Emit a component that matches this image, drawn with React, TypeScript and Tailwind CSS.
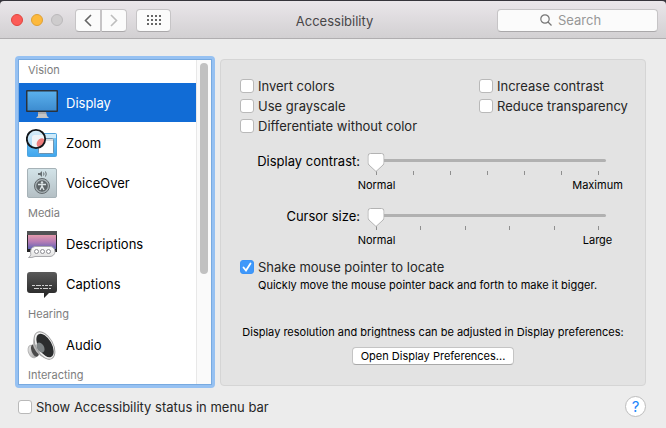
import { useState, type ReactNode } from "react";

const DisplayIcon = () => (
	<svg width="32" height="32" viewBox="0 -3 32 32" aria-hidden="true">
		<defs>
			<linearGradient id="screen" x1="0" y1="0" x2="0" y2="1">
				<stop offset="0" stopColor="#5ab0ec" />
				<stop offset="1" stopColor="#3d8cd0" />
			</linearGradient>
		</defs>
		<path d="M12 22h8l1 4 2 2H10l2-2z" fill="#c4c4c4" />
		<path d="M12 23h8" stroke="#8b8f96" />
		<rect width="32" height="22" rx="1" fill="#2a323c" />
		<rect x="1.500" y="1.500" width="29" height="19" fill="url(#screen)" />
	</svg>
);

const ZoomIcon = () => (
	<svg width="32" height="32" viewBox="0 -2 32 32" aria-hidden="true">
		<defs>
			<linearGradient id="zoomWin" x1="0" y1="0" x2="0" y2="1">
				<stop offset="0" stopColor="#7fcdf8" />
				<stop offset="1" stopColor="#3fa6ee" />
			</linearGradient>
			<linearGradient id="lens" x1="0" y1="0" x2="0" y2="1">
				<stop offset="0" stopColor="#dceef8" />
				<stop offset="1" stopColor="#9fd3f5" />
			</linearGradient>
			<clipPath id="lensClip">
				<circle cx="10" cy="10" r="9" />
			</clipPath>
		</defs>
		<rect x="1.500" y="4.500" width="29" height="23" rx="1" fill="url(#zoomWin)" stroke="#4ea3dd" />
		<path d="M2 5h28v4H2z" fill="#cdeafa" />
		<rect x="12.500" y="9.500" width="15" height="15" rx="1" fill="#fdfdfd" stroke="#6b92b0" />
		<path d="M13 10h14v2H13z" fill="#d8dde2" />
		<g clipPath="url(#lensClip)">
			<circle cx="10" cy="10" r="9" fill="url(#lens)" />
			<rect x="6" y="6" width="16" height="12" rx="2.500" fill="#f0f4f7" />
			<ellipse cx="15" cy="14" rx="4" ry="5" transform="rotate(35 15 14)" fill="#ef7e7c" />
		</g>
		<circle cx="10" cy="10" r="9.200" fill="none" stroke="#14171a" strokeWidth="1.800" />
	</svg>
);

const VoiceOverIcon = () => (
	<svg width="32" height="32" viewBox="0 0 32 32" aria-hidden="true">
		<defs>
			<linearGradient id="voice" x1="0" y1="0" x2="0" y2="1">
				<stop offset="0" stopColor="#d3e4e9" />
				<stop offset="1" stopColor="#b4bfc4" />
			</linearGradient>
		</defs>
		<rect x="1.500" y="1.500" width="29" height="29" rx="1.500" fill="url(#voice)" stroke="#a6b2b7" />
		<path d="M12 6h2l2-2v6l-2-2h-2z" fill="#666e71" />
		<path d="M17.500 5.500q1 1.500 0 3M19.500 4.500q1.500 2.500 0 5" fill="none" stroke="#666e71" />
		<circle cx="16" cy="19" r="7.500" fill="#a9b3b7" stroke="#62696c" />
		<circle cx="16" cy="19" r="5.800" fill="#5d6467" />
		<circle cx="16" cy="15.500" r="1.200" fill="#dce4e6" />
		<path d="M12 17.500h8M16 17.500v2.500M16 19l-2 4M16 19l2 4" stroke="#dce4e6" strokeWidth="1.400" />
	</svg>
);

const DescriptionsIcon = () => (
	<svg width="32" height="32" viewBox="0 0 32 32" aria-hidden="true">
		<defs>
			<linearGradient id="dusk" x1="0" y1="0" x2="0" y2="1">
				<stop offset="0" stopColor="#e59aac" />
				<stop offset="0.5" stopColor="#b47bb5" />
				<stop offset="1" stopColor="#5e63b4" />
			</linearGradient>
			<linearGradient id="bubble" x1="0" y1="0" x2="0" y2="1">
				<stop offset="0" stopColor="#ffffff" />
				<stop offset="1" stopColor="#dedede" />
			</linearGradient>
		</defs>
		<path d="M1 3h30v21H1z" fill="#252527" />
		<path d="M1 3h30v4H1z" fill="#515254" />
		<path d="M2 7h28v14H2z" fill="url(#dusk)" />
		<path
			d="M9 18.500h15a5 5 0 0 1 0 10H9q-3 1.500-6.500 1 2-1 2.300-3Q3.500 19.500 9 18.500z"
			fill="url(#bubble)"
			stroke="#a9a9ad"
		/>
		<g fill="#fff" stroke="#8c8c92">
			<circle cx="10.500" cy="23.500" r="2" />
			<circle cx="16.500" cy="23.500" r="2" />
			<circle cx="22.500" cy="23.500" r="2" />
		</g>
	</svg>
);

const CaptionsIcon = () => (
	<svg width="32" height="32" viewBox="0 0 32 32" aria-hidden="true">
		<defs>
			<linearGradient id="caption" x1="0" y1="0" x2="0" y2="1">
				<stop offset="0" stopColor="#5a5a5a" />
				<stop offset="1" stopColor="#232323" />
			</linearGradient>
		</defs>
		<path
			d="M4 4h24q3 0 3 3v15q0 3-3 3h-5l-5 5v-5H4q-3 0-3-3V7q0-3 3-3z"
			fill="url(#caption)"
		/>
		<path d="M6 17.500h20" stroke="#d0d0d0" strokeDasharray="3 1 5 1 2 1" />
		<path d="M8 20.500h17" stroke="#d0d0d0" strokeDasharray="5 1 2 1" />
	</svg>
);

const AudioIcon = () => (
	<svg width="32" height="32" viewBox="0 0 32 32" aria-hidden="true">
		<defs>
			<linearGradient id="magnet" x1="0" y1="0" x2="1" y2="1">
				<stop offset="0" stopColor="#f4f4f4" />
				<stop offset="1" stopColor="#8b8b8b" />
			</linearGradient>
		</defs>
		<ellipse cx="6.500" cy="22.500" rx="4" ry="6.500" transform="rotate(-22 6.500 22.500)" fill="url(#magnet)" stroke="#b4b4b4" />
		<ellipse cx="9" cy="21.500" rx="3.500" ry="6.500" transform="rotate(-22 9 21.500)" fill="#4a4a4a" />
		<path d="M10 6Q5 12 8 19q4 9 16 12z" fill="#b9b9b9" />
		<ellipse cx="18.500" cy="16.500" rx="8.500" ry="15" transform="rotate(-29 18.500 16.500)" fill="#f1f1f1" stroke="#9e9e9e" />
		<ellipse cx="19" cy="16.500" rx="6.800" ry="13" transform="rotate(-29 19 16.500)" fill="#2b2d2e" />
		<ellipse cx="14.500" cy="18.500" rx="3.500" ry="5.500" transform="rotate(-29 14.500 18.500)" fill="#7c8284" />
	</svg>
);

const sections = [
	{
		title: "Vision",
		items: [
			{ name: "Display", Icon: DisplayIcon },
			{ name: "Zoom", Icon: ZoomIcon },
			{ name: "VoiceOver", Icon: VoiceOverIcon },
		],
	},
	{
		title: "Media",
		items: [
			{ name: "Descriptions", Icon: DescriptionsIcon },
			{ name: "Captions", Icon: CaptionsIcon },
		],
	},
	{ title: "Hearing", items: [{ name: "Audio", Icon: AudioIcon }] },
	{ title: "Interacting", items: [] },
];

function Check({ children, checked = false }: { children: ReactNode; checked?: boolean }) {
	return (
		<label className="flex h-5 items-center gap-1 whitespace-nowrap text-[#262626]">
			<span className="grid size-3.5 flex-none">
				<input
					type="checkbox"
					defaultChecked={checked}
					className="peer col-start-1 row-start-1 size-3.5 appearance-none rounded-[3px] border border-[#b9b9b9] bg-white checked:border-[#3b93f7] checked:bg-[#3f98fa]"
				/>
				<svg
					viewBox="0 0 14 14"
					className="pointer-events-none invisible col-start-1 row-start-1 size-3.5 peer-checked:visible"
				>
					<path d="M3.500 7.500l2.500 3 4.500-7" fill="none" stroke="#fff" strokeWidth="1.800" strokeLinecap="round" />
				</svg>
			</span>
			{children}
		</label>
	);
}

type SliderProps = { id: string; label: string; ticks: number; min: string; max: string };

function Slider({ id, label, ticks, min, max }: SliderProps) {
	const [value, setValue] = useState(0);
	return (
		<div className="flex gap-2 pr-5">
			<label htmlFor={id} className="w-[120px] flex-none text-right leading-4">
				{label}
			</label>
			<div className="min-w-0 flex-1">
				<div className="relative h-[18px]">
					<input
						id={id}
						type="range"
						min={0}
						max={ticks - 1}
						value={value}
						onChange={(e) => setValue(Number(e.target.value))}
						className="peer absolute inset-0 z-10 m-0 w-full opacity-0"
					/>
					<div className="absolute inset-x-0 top-[6px] h-[3px] rounded-full bg-[#b1b1b1]" />
					<div className="absolute inset-x-2 inset-y-0">
						<svg
							width="17"
							height="19"
							viewBox="0 0 17 19"
							className="absolute top-0 -translate-x-1/2"
							style={{ left: `${(value / (ticks - 1)) * 100}%` }}
						>
							<path
								d="M3 .5h11q2.500 0 2.500 2.500v7q0 1-1 2l-7 6.500-7-6.500q-1-1-1-2V3Q.5.5 3 .5z"
								fill="#fff"
								stroke="#b3b3b3"
							/>
						</svg>
					</div>
				</div>
				<div className="flex justify-between pr-[7px] pl-2">
					{Array.from({ length: ticks }, (_, i) => (
						<span key={i} className="h-1 w-px bg-[#8f8f8f]" />
					))}
				</div>
				<div className="mt-0.5 flex justify-between px-2 text-[11px] leading-4">
					<span className="flex w-px justify-center whitespace-nowrap">{min}</span>
					<span className="flex w-px justify-center whitespace-nowrap">{max}</span>
				</div>
			</div>
		</div>
	);
}

function TitleBar() {
	const button =
		"flex h-[23px] items-center justify-center border border-[#c6c4c6] border-b-[#aaa8aa] bg-[#fbfbfb]";
	return (
		<header className="grid h-[38px] grid-cols-[1fr_auto_1fr] items-center rounded-t border-b border-[#b0aeb0] bg-linear-to-b from-[#eae6ea] to-[#d2d0d2] pt-px pr-2 pl-[11px]">
			<div className="flex items-center">
				<div className="flex gap-2">
					<button aria-label="Close" className="size-3 rounded-full border border-[#e0443e] bg-[#fc5b57]" />
					<button aria-label="Minimize" className="size-3 rounded-full border border-[#dea034] bg-[#fdb93c]" />
					<button aria-label="Zoom window" className="size-3 rounded-full border border-[#bbb9bb] bg-[#cecccd]" />
				</div>
				<div className="ml-3 flex">
					<button aria-label="Back" className={`${button} w-[26px] rounded-l`}>
						<svg width="8" height="13" viewBox="0 0 8 13" fill="none" stroke="#656565" strokeWidth="1.600">
							<path d="M7 1L1.500 6.500 7 12" />
						</svg>
					</button>
					<button aria-label="Forward" className={`${button} w-[26px] rounded-r`}>
						<svg width="8" height="13" viewBox="0 0 8 13" fill="none" stroke="#bdbdbd" strokeWidth="1.600">
							<path d="M1 1l5.500 5.500L1 12" />
						</svg>
					</button>
				</div>
				<button aria-label="Show all" className={`${button} ml-[9px] w-[35px] rounded`}>
					<svg width="14" height="10" viewBox="0 0 14 10" fill="#666">
						{[0, 4, 8].map((y) =>
							[0, 4, 8, 12].map((x) => <rect key={`${x}-${y}`} x={x} y={y} width="2" height="2" />),
						)}
					</svg>
				</button>
			</div>
			<h1 className="pt-px text-[#484648]">Accessibility</h1>
			<label className="flex h-[23px] w-[161px] items-center gap-1.5 justify-self-end rounded border border-[#c6c4c6] border-b-[#aaa8aa] bg-[#fbfbfb] pl-[42px]">
				<svg width="12" height="12" viewBox="0 0 12 12" fill="none" stroke="#757575" strokeWidth="1.200" className="flex-none">
					<circle cx="5" cy="5" r="4.200" />
					<path d="M8 8l3.500 3.500" />
				</svg>
				<input
					type="text"
					placeholder="Search"
					aria-label="Search"
					className="w-full min-w-0 bg-transparent outline-none placeholder:text-[#979797]"
				/>
			</label>
		</header>
	);
}

function Sidebar() {
	const [selected, setSelected] = useState("Display");
	return (
		<nav className="flex h-[332px] w-[200px] flex-none rounded-[4px] border-4 border-[#96c1f2] bg-white">
			<div className="flex min-w-0 flex-1 overflow-hidden outline outline-[#78aae0]">
				<div className="min-w-0 flex-1">
					{sections.map(({ title, items }, i) => (
						<section key={title}>
							<h2
								className={`pl-[9px] text-[11px] leading-5 text-[#7d7d7d] ${
									i === 0 ? "h-[23px]" : "h-[21px]"
								}`}
							>
								{title}
							</h2>
							{items.map(({ name, Icon }) => (
								<button
									key={name}
									onClick={() => setSelected(name)}
									className={`mb-px flex h-[39px] w-full items-center gap-2 pt-px pl-[7px] text-left ${
										selected === name ? "bg-[#116cd6] text-white" : "text-black"
									}`}
								>
									<Icon />
									{name}
								</button>
							))}
						</section>
					))}
				</div>
				<div className="w-[15px] flex-none border-l border-[#e8e8e8] bg-[#fafafa] px-[3px] pt-[3px]">
					<div className="h-[211px] w-2 rounded-full bg-[#c1c1c1]" />
				</div>
			</div>
		</nav>
	);
}

export default function App() {
	return (
		<div className="bg-[#36343b] pt-px font-[Inter,'Liberation_Sans',sans-serif] text-[13px] leading-5 text-black">
			<TitleBar />
			<div className="min-h-[389px] bg-[#ececec] pt-[17px]">
				<main className="flex items-start gap-[5px] pr-5 pl-[15px]">
					<Sidebar />
					<div className="mt-[3px] h-[327px] min-w-0 flex-1 rounded-[4px] border border-[#d5d5d5] bg-[#e3e3e3] px-[19px] pt-4">
						<div className="grid grid-cols-[239px_1fr]">
							<div>
								<Check>Invert colors</Check>
								<Check>Use grayscale</Check>
								<Check>Differentiate without color</Check>
							</div>
							<div>
								<Check>Increase contrast</Check>
								<Check>Reduce transparency</Check>
							</div>
						</div>
						<div className="mt-[17px] flex flex-col gap-[15px]">
							<Slider id="contrast" label="Display contrast:" ticks={7} min="Normal" max="Maximum" />
							<Slider id="cursor" label="Cursor size:" ticks={6} min="Normal" max="Large" />
						</div>
						<div className="mt-[9px]">
							<Check checked>Shake mouse pointer to locate</Check>
							<p className="pl-[18px] text-[11px] leading-4 whitespace-nowrap">
								Quickly move the mouse pointer back and forth to make it bigger.
							</p>
						</div>
						<div className="mt-[31px] flex flex-col items-center">
							<p className="text-[11px] leading-4 whitespace-nowrap">
								Display resolution and brightness can be adjusted in Display preferences:
							</p>
							<button className="mt-[7px] h-[18px] w-[162px] rounded-[4px] border border-[#c4c4c4] border-b-[#a9a9a9] bg-white text-[11px] leading-4">
								Open Display Preferences...
							</button>
						</div>
					</div>
				</main>
				<footer className="flex items-center justify-between pt-2 pr-5 pl-[18px]">
					<Check>Show Accessibility status in menu bar</Check>
					<button
						aria-label="Help"
						className="size-[21px] rounded-full border border-[#bdbdbd] bg-white text-[15px] leading-4 text-[#1f87fb]"
					>
						?
					</button>
				</footer>
			</div>
		</div>
	);
}
